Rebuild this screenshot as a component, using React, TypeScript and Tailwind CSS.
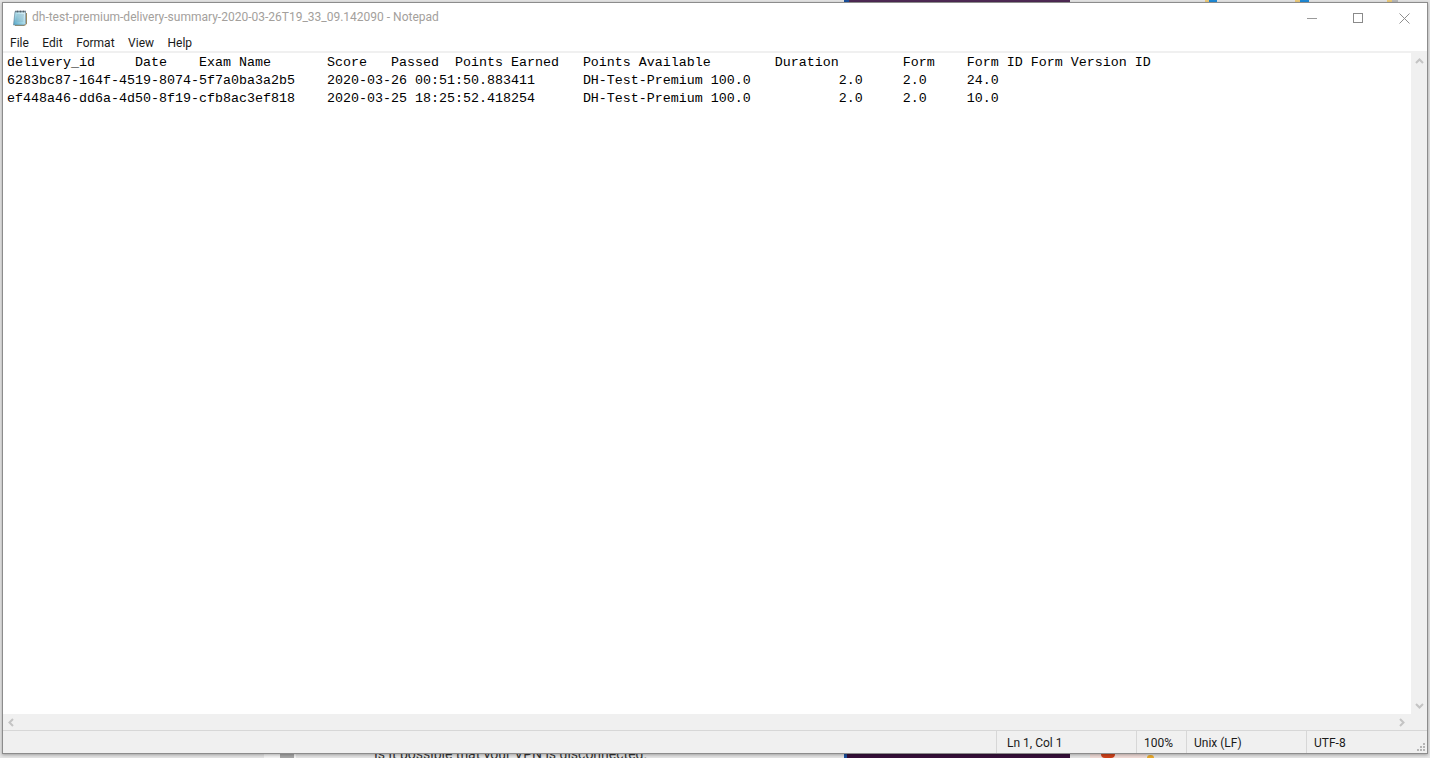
import React from "react";

const header =
  "delivery_id\tDate\tExam Name\tScore\tPassed\tPoints Earned\tPoints Available\tDuration\tForm\tForm ID\tForm Version ID";
const rows = [
  "6283bc87-164f-4519-8074-5f7a0ba3a2b5\t2020-03-26 00:51:50.883411\tDH-Test-Premium\t100.0\t\t2.0\t2.0\t24.0",
  "ef448a46-dd6a-4d50-8f19-cfb8ac3ef818\t2020-03-25 18:25:52.418254\tDH-Test-Premium\t100.0\t\t2.0\t2.0\t10.0",
];
const menu = ["File", "Edit", "Format", "View", "Help"];

const NotepadIcon = () => (
  <svg width="16" height="16" viewBox="0 0 16 16" className="shrink-0">
    <defs>
      <linearGradient id="pad" x1="0" y1="1" x2="1" y2="0">
        <stop offset="0" stopColor="#4fa3c4" />
        <stop offset="0.5" stopColor="#a9dbe9" />
        <stop offset="1" stopColor="#e4f3f8" />
      </linearGradient>
    </defs>
    <path d="M3 15.500h9.500l2-1.500v-11" fill="none" stroke="#9a8a62" strokeWidth="1" />
    <path d="M3 1.500h10.500v12L12 15H1.500z" fill="url(#pad)" stroke="#6f8a9c" strokeWidth="0.7" />
    <path d="M4 0.500v2M5.500 0.500v2M7 0.500v2M8.500 0.500v2M10 0.500v2M11.500 0.500v2M13 0.500v2" stroke="#3f4c56" strokeWidth="0.8" />
    <path d="M4.500 5h7.500M4.200 7h7.500M4 9h7.500M3.800 11h7.500" stroke="#7fa9bc" strokeWidth="0.7" />
  </svg>
);

const Chevron = ({ d }: { d: string }) => (
  <svg width="9" height="9" viewBox="0 0 9 9">
    <path d={d} fill="none" stroke="#c4c4c4" strokeWidth="2" />
  </svg>
);

export default function App() {
  return (
    <div className="relative h-[758px] w-[1430px] overflow-hidden bg-[#e4e4e4] font-['Roboto',sans-serif]">
      {/* desktop behind the window */}
      <div className="absolute left-[844px] top-0 h-[3px] w-[226px] bg-[#4f2a55]" />
      <div className="absolute left-[844px] top-0 h-[3px] w-[5px] bg-[#1a4f9c]" />
      <div className="absolute left-[1205px] top-0 h-[3px] w-[4px] bg-[#eccb7a]" />
      <div className="absolute left-[1209px] top-0 h-[3px] w-[8px] bg-[#1f8ad6]" />
      <div className="absolute left-[1295px] top-0 h-[3px] w-[5px] bg-[#eccb7a]" />
      <div className="absolute left-[1300px] top-0 h-[3px] w-[9px] bg-[#1f8ad6]" />
      <div className="absolute left-[1387px] top-0 h-[3px] w-[5px] bg-[#eccb7a]" />
      <div className="absolute left-[1392px] top-0 h-[3px] w-[6px] bg-[#b8b8b8]" />
      <div className="absolute bottom-0 left-[844px] h-[5px] w-[226px] bg-[#37103a]" />
      <div className="absolute bottom-0 left-[844px] h-[5px] w-[3px] bg-[#1a4f9c]" />
      <div className="absolute bottom-0 left-[1090px] h-[5px] w-[56px] bg-[#f0dcd8]" />
      <div className="absolute bottom-0 left-[1101px] h-[4px] w-[14px] rounded-b-full bg-[#d0421b]" />
      <div className="absolute bottom-0 left-[1147px] h-[3px] w-[7px] rounded-t-full bg-[#e8a92c]" />
      <div className="absolute bottom-0 left-[264px] h-[5px] w-[32px] bg-[#f4f4f4]" />
      <div className="absolute bottom-0 left-[280px] h-[5px] w-[14px] bg-[#a8a8a8]" />
      <div className="absolute -bottom-[6px] left-[374px] whitespace-nowrap text-[14px] leading-[20px] text-[#333333]">
        Is it possible that your VPN is disconnected.
      </div>

      {/* notepad window */}
      <div className="absolute left-[2px] top-[2px] flex h-[752px] w-[1426px] flex-col border border-[#8c8c8c] bg-white shadow-[0_1px_3px_rgba(0,0,0,0.3)]">
        <div className="flex h-[30px] shrink-0 items-center pl-[9px]">
          <NotepadIcon />
          <span className="mb-[2px] ml-[4px] whitespace-nowrap text-[12px] text-[#a3a09c]">
            dh-test-premium-delivery-summary-2020-03-26T19_33_09.142090 - Notepad
          </span>
          <div className="ml-auto flex items-center">
            <div className="flex w-[46px] justify-center">
              <div className="h-px w-[10px] bg-[#9a9a9a]" />
            </div>
            <div className="flex w-[46px] justify-center">
              <div className="h-[10px] w-[10px] border border-[#8a8a8a]" />
            </div>
            <div className="flex w-[46px] justify-center">
              <svg width="11" height="11" viewBox="0 0 11 11">
                <path d="M0.500 0.500l10 10M10.500 0.500l-10 10" stroke="#8f8f8f" strokeWidth="1" />
              </svg>
            </div>
          </div>
        </div>

        <div className="flex h-[18px] shrink-0 items-center pl-[7px] pt-[2px] text-[12px] text-[#1a1a1a]">
          {menu.map((m) => (
            <span key={m} className="mr-[13.5px]">
              {m}
            </span>
          ))}
        </div>
        <div className="h-[2px] shrink-0 bg-[#f0f0f0]" />

        <div className="flex min-h-0 flex-1">
          <pre className="min-w-0 flex-1 overflow-hidden pl-[4px] pt-[1px] font-['Liberation_Mono',monospace] text-[13.33px] leading-[18px] text-black [tab-size:8]">
            {[header, ...rows].join("\n")}
          </pre>
          <div className="flex w-[16px] shrink-0 flex-col items-center justify-between bg-[#f0f0f0] py-[4px]">
            <Chevron d="M1 6l3.500-3.500 3.500 3.500" />
            <Chevron d="M1 3l3.500 3.500 3.500-3.500" />
          </div>
        </div>

        <div className="flex h-[16px] shrink-0 items-center justify-between bg-[#f0f0f0] pl-[4px] pr-[21px]">
          <Chevron d="M6 1l-3.500 3.500 3.500 3.500" />
          <Chevron d="M3 1l3.500 3.500-3.500 3.500" />
        </div>

        <div className="relative flex h-[23px] shrink-0 items-center border-t border-[#d7d7d7] bg-[#f0f0f0] text-[12px] text-[#1a1a1a]">
          <div className="w-[993px] shrink-0" />
          <div className="flex h-full w-[140px] items-center border-l border-[#d7d7d7] pl-[10px] pt-[2px]">Ln 1, Col 1</div>
          <div className="flex h-full w-[50px] items-center border-l border-[#d7d7d7] pl-[7px] pt-[2px]">100%</div>
          <div className="flex h-full w-[120px] items-center border-l border-[#d7d7d7] pl-[7px] pt-[2px]">Unix (LF)</div>
          <div className="flex h-full flex-1 items-center border-l border-[#d7d7d7] pl-[7px] pt-[2px]">UTF-8</div>
          <svg width="10" height="10" viewBox="0 0 10 10" className="absolute bottom-[1px] right-[1px]">
            <path d="M7 1h2v2H7zM4 4h2v2H4zM7 4h2v2H7zM1 7h2v2H1zM4 7h2v2H4zM7 7h2v2H7z" fill="#b5b5b5" />
          </svg>
        </div>
      </div>
    </div>
  );
}
